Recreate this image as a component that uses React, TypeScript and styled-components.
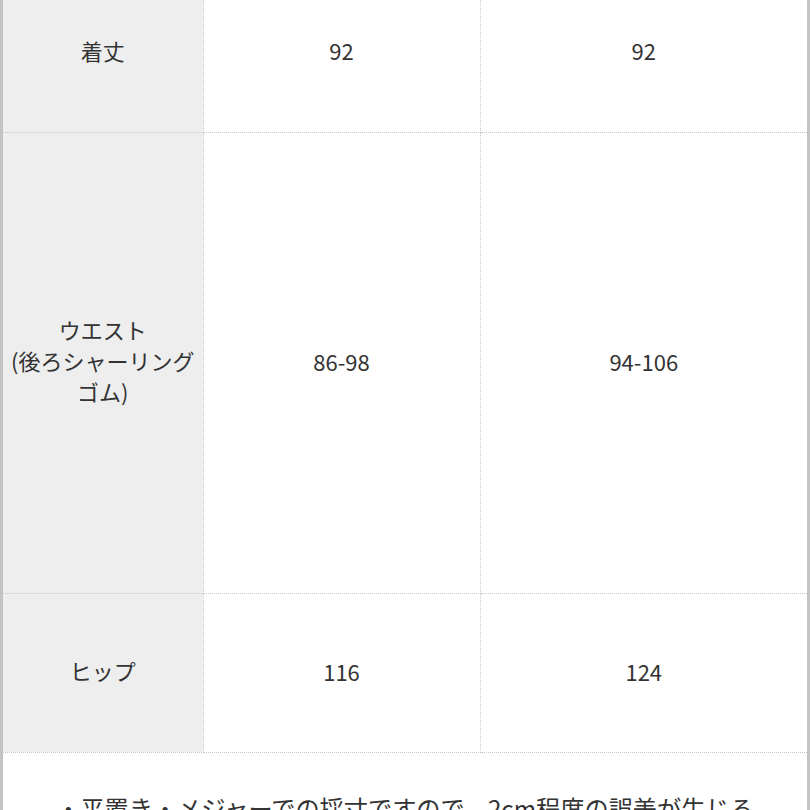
import styled, { createGlobalStyle } from "styled-components";

const GlobalStyle = createGlobalStyle`
  html, body {
    margin: 0;
    padding: 0;
    background: #ffffff;
    overflow: hidden;
  }
  body {
    font-family: "Noto Sans CJK JP", "Noto Sans", sans-serif;
    color: #333333;
  }
`;

const Frame = styled.div`
  width: 810px;
  height: 810px;
  overflow: hidden;
  box-sizing: border-box;
  border-left: 3px solid #c4c4c4;
  border-right: 3px solid #c4c4c4;
`;

const SizeTable = styled.table`
  width: 100%;
  margin-top: -27px;
  border-collapse: collapse;
  table-layout: fixed;
  font-size: 22px;
  line-height: 31px;
`;

const Row = styled.tr<{ h: number }>`
  height: ${(p) => p.h}px;
`;

const Head = styled.th`
  width: 200px;
  background: #eeeeee;
  font-weight: 400;
  text-align: center;
  vertical-align: middle;
  padding: 0 6px 4px;
  border-right: 1px dotted #c8c8c8;
  border-bottom: 1px dotted #c8c8c8;
`;

const Cell = styled.td<{ last?: boolean }>`
  text-align: center;
  vertical-align: middle;
  padding-bottom: 4px;
  border-bottom: 1px dotted #c8c8c8;
  border-right: ${(p) => (p.last ? "none" : "1px dotted #c8c8c8")};
`;

const NoteCell = styled.td`
  padding: 37px 50px 0;
  vertical-align: top;
  text-align: center;
  font-size: 24.2px;
  line-height: 36px;
`;

const rows = [
  { label: ["着丈"], a: "92", b: "92", h: 159 },
  { label: ["ウエスト", "(後ろシャーリング", "ゴム)"], a: "86-98", b: "94-106", h: 461 },
  { label: ["ヒップ"], a: "116", b: "124", h: 159 },
];

export default function App() {
  return (
    <>
      <GlobalStyle />
      <Frame>
        <SizeTable>
          <colgroup>
            <col style={{ width: 200 }} />
            <col style={{ width: 277 }} />
            <col />
          </colgroup>
          <tbody>
            {rows.map((r) => (
              <Row key={r.a + r.label[0]} h={r.h}>
                <Head>
                  {r.label.map((l, i) => (
                    <div key={i}>{l}</div>
                  ))}
                </Head>
                <Cell>{r.a}</Cell>
                <Cell last>{r.b}</Cell>
              </Row>
            ))}
            <tr>
              <NoteCell colSpan={3}>
                ・平置き・メジャーでの採寸ですので、2cm程度の誤差が生じる場合がございます。
              </NoteCell>
            </tr>
          </tbody>
        </SizeTable>
      </Frame>
    </>
  );
}
